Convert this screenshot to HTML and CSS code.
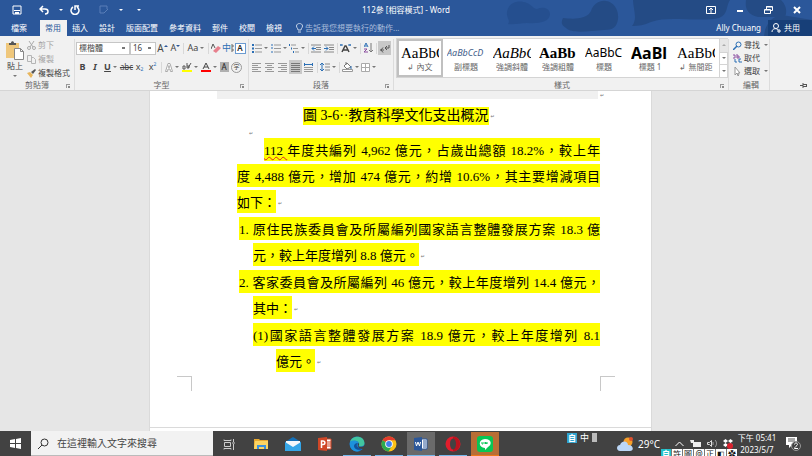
FILE: index.html
```html
<!DOCTYPE html>
<html lang="zh-Hant">
<head>
<meta charset="utf-8">
<title>112參 [相容模式] - Word</title>
<link rel="stylesheet" href="styles.css">
</head>
<body>
<header class="top">
  <svg class="clouds" viewBox="0 0 332 36" preserveAspectRatio="xMaxYMin slice" aria-hidden="true">
    <path fill="#254f8f" d="M27 12C28 3 38-1 47 3c6 3 7 6 10 6 7-3 13 0 13 5 0 8-12 10-23 9-7 0-13 2-19 1 3-3-2-6-1-12z"/>
    <path fill="#244b85" d="M111 11c2-7 9-11 15-10 8 1 13 9 12 18-1 8-5 11-14 11-15 1-32 4-38-2-5-3-5-6-3-10 9 1 24 2 28-7zM153 0h97c-5 8-1 17-16 19-28 2-46-3-63 3-7 3-12 4-19 4 6-7 1-18 1-26zM266 0h35c6 6 6 12 4 17h-27c-12-3-13-10-12-17zM285 30c4-12 13-17 23-14l24 4v16h-48z"/>
  </svg>
  <div class="titlebar">
    <div class="quick">
      <button aria-label="儲存"><svg width="10" height="10" viewBox="0 0 10 10"><path d="M1 1h8v8H1z" fill="none" stroke="#fff"/><path d="M2 5h6v1H2zM3 7h4v2H3z" fill="#fff"/></svg></button>
      <button aria-label="復原"><svg width="10" height="10" viewBox="0 0 10 10"><path d="M1 4h5c4 0 4 5 0 5M4 1L1 4l3 3" fill="none" stroke="#fff" stroke-width="1.5"/></svg></button>
      <i class="caret"></i>
      <button aria-label="重複"><svg width="10" height="10" viewBox="0 0 10 10"><path d="M3 2a4 4 0 1 0 4 0M5 5V1h4" fill="none" stroke="#fff" stroke-width="1.5"/></svg></button>
      <button class="pen" aria-label="觸控筆"><svg width="10" height="10" viewBox="0 0 10 10"><path d="M5 8H1V1h7v3M9 4L5 8" fill="none" stroke="#5a7fb8"/></svg></button>
      <i class="caret"></i>
      <button class="more" aria-label="自訂"><i class="caret"></i></button>
    </div>
    <h1>112參 [相容模式] - Word</h1>
    <div class="window">
      <button aria-label="功能區選項"><svg width="10" height="8" viewBox="0 0 10 8"><path d="M.5.5h9v7h-9zM5 2v5M3 4l2-2 2 2" fill="none" stroke="#fff"/></svg></button>
      <button aria-label="最小化"><svg width="8" height="8" viewBox="0 0 8 8"><path d="M1 4h6v2H1z" fill="#fff"/></svg></button>
      <button aria-label="還原"><svg width="9" height="8" viewBox="0 0 9 8"><path d="M.5 3.500h6v4h-6zM2.500 3V.5h6v4H7M2 1h6M1 4h5" fill="none" stroke="#fff"/></svg></button>
      <button aria-label="關閉"><svg width="8" height="8" viewBox="0 0 8 8"><path d="M1 1l6 6M7 1L1 7" stroke="#fff" stroke-width="2"/></svg></button>
    </div>
  </div>
  <nav class="tabs">
    <button class="file">檔案</button><button class="on">常用</button><button>插入</button><button>設計</button><button>版面配置</button><button>參考資料</button><button>郵件</button><button>校閱</button><button>檢視</button>
    <button class="tell"><svg width="7" height="10" viewBox="0 0 7 10"><path d="M2 7c0-2-1.500-2-1.500-4 0-3.300 6-3.300 6 0C6.500 5 5 5 5 7zM2 9h3" fill="none" stroke="#c5d3e8"/></svg>告訴我您想要執行的動作...</button>
    <span class="user">Ally Chuang</span>
    <button class="share"><svg width="10" height="10" viewBox="0 0 10 10"><circle cx="5" cy="3" r="2.500" fill="none" stroke="#fff"/><path d="M1 9c0-4 5-4 6-2M8 6v4M6 8h4" fill="none" stroke="#fff"/></svg>共用</button>
  </nav>
</header>

<section class="ribbon">
  <div class="group clipboard">
    <div class="cols">
      <button class="paste"><svg width="18" height="19" viewBox="0 0 18 19"><path d="M0 2h13v15H0z" fill="#efc77c"/><path d="M3 4V2h2c0-2.500 3-2.500 3 0h2v2z" fill="#555"/><path d="M8.500 7.500h6l3 3v8h-9z" fill="#fff" stroke="#888"/><path d="M14.500 7.500v3h3" fill="none" stroke="#888"/></svg><span>貼上</span><i class="caret"></i></button>
      <div class="stack">
        <button class="off"><svg width="9" height="9" viewBox="0 0 9 9"><path d="M2 0l4 6M7 0L3 6" stroke="#aaa"/><circle cx="2" cy="7" r="1.500" fill="none" stroke="#aaa"/><circle cx="7" cy="7" r="1.500" fill="none" stroke="#aaa"/></svg>剪下</button>
        <button class="off"><svg width="9" height="9" viewBox="0 0 9 9"><path d="M.5.5h4v6h-4zM4.500 2.500h2l2 2v4h-4z" fill="#f1f1f1" stroke="#b5b5b5"/></svg>複製</button>
        <button><svg width="9" height="9" viewBox="0 0 9 9"><path d="M0 4l3-1 3 3-2 3z" fill="#e8b55b"/><path d="M4 3l4-3 1 1-3 4z" fill="#555"/></svg>複製格式</button>
      </div>
    </div>
    <h2>剪貼簿<i class="launch"></i></h2>
  </div>

  <div class="group font">
    <div class="row f1">
      <select aria-label="字型"><option>標楷體</option></select>
      <select aria-label="字型大小"><option>16</option></select>
      <button aria-label="放大字型"><span class="t10">A</span><svg width="4" height="8" viewBox="0 0 4 8"><path d="M0 3l2-2 2 2z" fill="#2b579a"/></svg></button>
      <button aria-label="縮小字型"><span class="t9">A</span><svg width="4" height="8" viewBox="0 0 4 8"><path d="M0 1h4L2 3z" fill="#2b579a"/></svg></button>
      <i class="sep"></i>
      <button><span class="t9">Aa</span><i class="caret"></i></button>
      <i class="sep"></i>
      <button aria-label="清除格式"><svg width="10" height="10" viewBox="0 0 10 10"><path d="M0 6l2-5 2 4" fill="none" stroke="#555"/><path d="M2 8l5-5 3 2-5 5z" fill="#e7808d"/></svg></button>
      <button class="blue t9" aria-label="注音標示">中<svg width="3" height="9" viewBox="0 0 3 9"><path d="M0 1h2v2H0M0 5h2v2H0" fill="none" stroke="#666"/></svg></button>
      <button class="boxed">A</button>
    </div>
    <div class="row f2">
      <button class="t9"><b>B</b></button>
      <button class="t9"><b class="it">I</b></button>
      <button class="t9"><b class="un">U</b><i class="caret"></i></button>
      <button class="t8"><s>abc</s></button>
      <button class="t9">x<sub>2</sub></button>
      <button class="t9">x<sup>2</sup></button>
      <i class="sep"></i>
      <button aria-label="文字效果"><svg width="8" height="9" viewBox="0 0 8 9"><path d="M.5 8.500L3 .5h2l2.500 8h-2L5 6H3l-.5 2.500zM3.500 4.500h1L4 2.500z" fill="#fff" stroke="#aaa"/></svg><i class="caret"></i></button>
      <button aria-label="醒目提示"><svg width="10" height="11" viewBox="0 0 10 11"><path d="M0 8h10v2H0z" fill="#ff0"/><path d="M1 4h2v3H1zM5 1v5h2V4H5M9 1L6 6" fill="none" stroke="#555"/></svg><i class="caret"></i></button>
      <button aria-label="字型色彩"><svg width="10" height="11" viewBox="0 0 10 11"><path d="M0 8h10v2H0z" fill="red"/><path d="M2 7l3-6 3 6M3 5h4" fill="none" stroke="#444"/></svg><i class="caret"></i></button>
      <button class="shade">A</button>
      <button class="ring">字</button>
    </div>
    <h2>字型<i class="launch"></i></h2>
  </div>

  <div class="group para">
    <div class="row p1">
      <button aria-label="項目符號"><svg width="10" height="9" viewBox="0 0 10 9"><path d="M0 1h2M0 4.500h2M0 8h2" stroke="#2b6fb5" stroke-width="2"/><path d="M3 1h7M3 4.500h7M3 8h7" stroke="#999"/></svg><i class="caret"></i></button>
      <button aria-label="編號"><svg width="10" height="9" viewBox="0 0 10 9"><path d="M1 0v2M1 3v2M1 7v2" stroke="#2b6fb5"/><path d="M3 1h7M3 4.500h7M3 8h7" stroke="#999"/></svg><i class="caret"></i></button>
      <button aria-label="多層次清單"><svg width="10" height="9" viewBox="0 0 10 9"><path d="M0 1h1M2 4.500h1M4 8h1" stroke="#2b6fb5" stroke-width="2"/><path d="M2 1h5M4 4.500h5M6 8h4" stroke="#999"/></svg><i class="caret"></i></button>
      <i class="sep"></i>
      <button aria-label="減少縮排"><svg width="10" height="9" viewBox="0 0 10 9"><path d="M0 1h10M5 3.500h5M5 5.500h5M0 8h10" stroke="#888"/><path d="M5 4.500H1M3 2.500l-2 2 2 2" fill="none" stroke="#2b6fb5"/></svg></button>
      <button aria-label="增加縮排"><svg width="10" height="9" viewBox="0 0 10 9"><path d="M0 1h10M5 3.500h5M5 5.500h5M0 8h10" stroke="#888"/><path d="M0 4.500h4M2 2.500l2 2-2 2" fill="none" stroke="#2b6fb5"/></svg></button>
      <i class="sep"></i>
      <button aria-label="亞洲配置方式"><svg width="11" height="9" viewBox="0 0 11 9"><path d="M2 8l3-6h1l3 6M3 6h5" fill="none" stroke="#444" stroke-width="1.500"/><path d="M0 1h3M8 1h3M1 0v2M10 0v2" fill="none" stroke="#2b6fb5"/></svg><i class="caret"></i></button>
      <i class="sep"></i>
      <button aria-label="排序"><svg width="9" height="10" viewBox="0 0 9 10"><path d="M0 4l2-4 2 4M1 3h2" fill="none" stroke="#2b6fb5"/><path d="M0 6h3L0 9h4" fill="none" stroke="#8b4fa0"/><path d="M7 0v9M5 7l2 2 2-2" fill="none" stroke="#777"/></svg></button>
      <i class="sep"></i>
      <button class="pressed" aria-label="顯示編輯標記"><svg width="10" height="9" viewBox="0 0 10 9"><path d="M0 6h4M3 3.500L1 6l2 2.500M9 1v3H6M7 2L5 4l2 2" fill="none" stroke="#555"/></svg></button>
    </div>
    <div class="row p2">
      <button aria-label="靠左"><svg width="9" height="9" viewBox="0 0 9 9"><path d="M0 .5h9M0 2.500h6M0 4.500h9M0 6.500h6M0 8.500h9" stroke="#999"/></svg></button>
      <button aria-label="置中"><svg width="9" height="9" viewBox="0 0 9 9"><path d="M0 .5h9M2 2.500h5M0 4.500h9M2 6.500h5M0 8.500h9" stroke="#999"/></svg></button>
      <button aria-label="靠右"><svg width="9" height="9" viewBox="0 0 9 9"><path d="M0 .5h9M3 2.500h6M0 4.500h9M3 6.500h6M0 8.500h9" stroke="#999"/></svg></button>
      <button class="pressed" aria-label="左右對齊"><svg width="9" height="9" viewBox="0 0 9 9"><path d="M0 .5h9M0 2.500h9M0 4.500h9M0 6.500h9M0 8.500h9" stroke="#777"/></svg></button>
      <button aria-label="分散對齊"><svg width="9" height="9" viewBox="0 0 9 9"><path d="M.5 0v3M8.500 0v3M1 1.500h7" stroke="#2b6fb5"/><path d="M0 4.500h9M0 6.500h9M0 8.500h9" stroke="#999"/></svg></button>
      <i class="sep"></i>
      <button aria-label="行距"><svg width="10" height="10" viewBox="0 0 10 10"><path d="M2 1v8M0 3l2-2 2 2M0 7l2 2 2-2" fill="none" stroke="#2b6fb5"/><path d="M5 2h5M5 5h5M5 8h5" stroke="#888"/></svg><i class="caret"></i></button>
      <i class="sep"></i>
      <button aria-label="網底"><svg width="11" height="10" viewBox="0 0 11 10"><path d="M2 4l3-3 4 4-4 2zM4 3V0" fill="#fff" stroke="#777"/><path d="M9 4v3" stroke="#2b6fb5"/><path d="M.5 7.500h10v2H.5z" fill="#fff" stroke="#999"/></svg><i class="caret"></i></button>
      <button aria-label="框線"><svg width="9" height="9" viewBox="0 0 9 9"><path d="M.5.5h8v8h-8zM4.500 0v9M0 4.500h9" fill="#fff" stroke="#aaa"/></svg><i class="caret"></i></button>
    </div>
    <h2>段落<i class="launch"></i></h2>
  </div>

  <div class="group styles">
    <div class="gallery">
      <button class="style chosen"><span class="pv serif">AaBbC</span><small>↲ 內文</small></button>
      <button class="style"><span class="pv sub">AaBbCcD</span><small>副標題</small></button>
      <button class="style"><span class="pv serif it">AaBbC</span><small>強調斜體</small></button>
      <button class="style"><span class="pv serif bold">AaBb</span><small>強調粗體</small></button>
      <button class="style"><span class="pv sans">AaBbC</span><small>標題</small></button>
      <button class="style"><span class="pv big">AaBl</span><small>標題 1</small></button>
      <button class="style"><span class="pv serif">AaBbC</span><small>↲ 無間距</small></button>
      <div class="scroll"><button class="dim" aria-label="上"><i class="caret up"></i></button><button aria-label="下"><i class="caret"></i></button><button aria-label="其他"><i class="caret line"></i></button></div>
    </div>
    <h2>樣式<i class="launch"></i></h2>
  </div>

  <div class="group edit">
    <div class="stack">
      <button><svg width="9" height="9" viewBox="0 0 9 9"><circle cx="5.500" cy="3.500" r="2.500" fill="none" stroke="#2b6fb5"/><path d="M4 5L0 9" stroke="#2b6fb5" stroke-width="1.500"/></svg>尋找<i class="caret"></i></button>
      <button><svg width="9" height="9" viewBox="0 0 9 9"><path d="M0 1h2v3H0M4 0v4h2V2H4" fill="none" stroke="#8b4fa0"/><path d="M2 5v3h2M8 5H6v3h3" fill="none" stroke="#2b6fb5"/></svg>取代</button>
      <button><svg width="9" height="9" viewBox="0 0 9 9"><path d="M2 0v8l2-2 1 3 1-1-1-2h2z" fill="#fff" stroke="#999"/></svg>選取<i class="caret"></i></button>
    </div>
    <h2>編輯</h2>
  </div>
  <button class="pin" aria-label="釘選功能區"><svg width="7" height="5" viewBox="0 0 7 5"><path d="M0 2.500h3M3 0v5M3 1.500h4M3 3.500h4M6.500 1v3" fill="none" stroke="#555"/></svg></button>
</section>

<main class="desk">
  <article class="page">
    <div class="cell"><span></span><i class="ret">↵</i></div>
    <p class="caption"><mark>圖 3-6··教育科學文化支出概況</mark><i class="ret">↵</i></p>
    <p class="blank"><i class="ret">↵</i></p>
    <p class="body">
      <mark class="full first"><span class="wavy">112&nbsp;</span>年度共編列 4,962 億元，占歲出總額 18.2%，較上年</mark>
      <mark class="full">度 4,488 億元，增加 474 億元，約增 10.6%，其主要增減項目</mark>
      <mark>如下：</mark><i class="ret">↵</i>
    </p>
    <p class="body">
      <mark class="full num">1. 原住民族委員會及所屬編列國家語言整體發展方案 18.3 億</mark>
      <mark class="in">元，較上年度增列 8.8 億元。</mark><i class="ret">↵</i>
    </p>
    <p class="body">
      <mark class="full num">2. 客家委員會及所屬編列 46 億元，較上年度增列 14.4 億元，</mark>
      <mark class="in">其中：</mark><i class="ret">↵</i>
    </p>
    <p class="body">
      <mark class="full in">(1)國家語言整體發展方案 18.9 億元，較上年度增列 8.1</mark>
      <mark class="in2">億元。</mark><i class="ret">↵</i>
    </p>
    <div class="corners"><i class="l"></i><i class="r"></i></div>
  </article>
  <div class="page next"></div>
</main>

<footer class="taskbar">
  <button class="start" aria-label="開始"><svg width="11" height="11" viewBox="0 0 11 11"><path d="M0 2l5-1v4H0zM6 1l5-1v5H6zM0 6h5v4L0 9zM6 6h5v5l-5-1z" fill="#fff"/></svg></button>
  <label class="search"><svg width="11" height="11" viewBox="0 0 11 11"><circle cx="6.500" cy="4.500" r="3.500" fill="none" stroke="#333"/><path d="M4 7l-4 4" stroke="#333"/></svg><input type="text" placeholder="在這裡輸入文字來搜尋" aria-label="搜尋"></label>
  <div class="apps">
    <button aria-label="工作檢視"><svg width="12" height="11" viewBox="0 0 12 11"><path d="M1.500 3.500h6v4h-6zM1 .5v1h7v-1M1 10.500v-1h7v1M10.500 0v3M10.500 5v6M9 4h3" fill="none" stroke="#ccc"/></svg></button>
    <button aria-label="檔案總管"><svg width="14" height="12" viewBox="0 0 14 12"><path d="M0 1h5l1 1h8v9H0z" fill="#e8a92f"/><path d="M1 3h13v8H0z" fill="#fcd462"/><path d="M3 11V7h9v4h-2V9H5v2z" fill="#3c91dc"/></svg></button>
    <button aria-label="郵件"><svg width="16" height="14" viewBox="0 0 16 14"><path d="M0 5l8-5 8 5v9H0z" fill="#1470b8"/><path d="M1 4h14v4l-7 4-7-4z" fill="#f4f7fa"/><path d="M0 5l8 5 8-5v9H0z" fill="#35a6e8"/></svg></button>
    <button aria-label="PowerPoint"><svg width="14" height="14" viewBox="0 0 14 14"><path d="M7 2h6v10H7z" fill="#fff" stroke="#d04727"/><path d="M9 5h4M9 7h4M9 9h4" stroke="#d04727"/><path d="M0 1l9-1v14l-9-1z" fill="#d04727"/><path d="M3.500 11V4H5c2.500 0 2.500 3.500 0 3.500H3.500" fill="none" stroke="#fff" stroke-width="1.500"/></svg></button>
    <button class="run" aria-label="Edge"><svg width="16" height="16" viewBox="0 0 16 16"><circle cx="8" cy="8" r="7.500" fill="#1b78c8"/><path d="M1 6C3-1 15-1 15.500 7c0 4-5 4-6 3 2-3-1-6-5-5-2 0-3 1-3.500 1z" fill="#42c6a0"/><path d="M1 6c3-3 8-1 8 1-3 0-4 5 0 7l2 1C4 17 0 12 1 6z" fill="#1d92dc"/><path d="M9 7c-3 2-1 6 5 5-2 3-9 2-9-2 0-2 2-3 4-3z" fill="#12519a"/><path d="M9.500 7c1 1 .5 2 0 3 2 2 6 0 6.500-1v4h-2c-5 0-6-4-4.500-6z" fill="#424242"/></svg></button>
    <button class="run" aria-label="Chrome"><svg width="16" height="16" viewBox="0 0 16 16"><circle cx="8" cy="8" r="7.500" fill="#fbc116"/><path d="M8 8L1.500 4.200A7.500 7.500 0 0 1 14.500 4.200H8z" fill="#e33b2e"/><path d="M1.500 4.200A7.500 7.500 0 0 0 7.500 15.500L11 10 8 8z" fill="#2da94f"/><circle cx="8" cy="8" r="3.800" fill="#fff"/><circle cx="8" cy="8" r="2.900" fill="#4081ec"/></svg></button>
    <button class="run tile" aria-label="Word"><svg width="14" height="14" viewBox="0 0 14 14"><path d="M7 2h6v10H7z" fill="#fff" stroke="#2b579a"/><path d="M9 4h3M9 6h3M9 8h3M9 10h3" stroke="#2b579a"/><path d="M0 1l8-1v14l-8-1z" fill="#2b579a"/><path d="M1.500 5l1 4L4 5l1.500 4 1-4" fill="none" stroke="#fff"/></svg></button>
    <button class="run" aria-label="Opera"><svg width="16" height="16" viewBox="0 0 16 16"><circle cx="8" cy="8" r="7.500" fill="#e21d2c"/><path d="M8 1c4-1 7 3 7 7s-3 8-7 7z" fill="#b9131e"/><ellipse cx="8" cy="8" rx="3" ry="5.500" fill="#424242"/></svg></button>
    <button class="line-app" aria-label="LINE"><svg width="16" height="16" viewBox="0 0 16 16"><rect width="16" height="16" rx="3" fill="#07c755"/><path d="M8 3c7 0 7 6 3 8l-3 3v-2C1 12 1 3 8 3z" fill="#fff"/><path d="M5 6v2h1M7 6v2M8.500 8V6l1.500 2V6" fill="none" stroke="#07c755"/></svg></button>
  </div>
  <div class="ime"><b>自</b><span>中</span><i></i></div>
  <div class="weather"><svg width="17" height="14" viewBox="0 0 17 14"><circle cx="11" cy="5" r="4.500" fill="#f5a02a"/><circle cx="14" cy="2" r="2" fill="#e0502d"/><path d="M3 14c-4 0-4-6 0-6 2-5 8-4 8 0 6 0 6 6 2 6z" fill="#bcd7f7"/></svg>29°C</div>
  <div class="tray">
    <svg width="9" height="6" viewBox="0 0 9 6"><path d="M.5 5l4-4 4 4" fill="none" stroke="#fff"/></svg>
    <svg width="11" height="9" viewBox="0 0 11 9"><path d="M3 3h8v5H3zM0 1h4v3H1z" fill="#eee"/></svg>
    <svg width="10" height="9" viewBox="0 0 10 9"><path d="M.5 3.500h2l2-2v6l-2-2h-2z" fill="none" stroke="#ddd"/><path d="M6 3v3M8 1c2 2 2 5 0 7" fill="none" stroke="#aaa"/></svg>
    <svg width="10" height="10" viewBox="0 0 10 10"><path d="M0 2l2.500-2L5 2l2.500-2L10 2 7.500 4 10 6 7.500 8 5 6 2.500 8 0 6l2.500-2zM5 2L2.500 4 5 6l2.500-2z" fill="#fff" fill-rule="evenodd"/><circle cx="7" cy="7" r="3" fill="#d8212d"/></svg>
  </div>
  <div class="clock"><span>下午 05:41</span><span>2023/5/7</span></div>
  <button class="notice" aria-label="通知"><svg width="15" height="16" viewBox="0 0 15 16"><path d="M0 1h11v8H6l-3 3V9H0z" fill="#fff"/><path d="M2 3h7M2 5h7" stroke="#555"/><circle cx="10" cy="10" r="4.500" fill="#424242" stroke="#999"/><path d="M8.500 8.500c0-2 3-2 3 0 0 1-3 2.500-3 4h3.500" fill="none" stroke="#fff"/></svg></button>
  <div class="imebar"><b>自</b><span>許</span><span>圖</span><span>@</span><span>正</span><span>◧</span><span>✿</span></div>
</footer>
</body>
</html>
```
FILE: styles.css
```css
* { box-sizing: border-box; margin: 0; padding: 0; }
html, body { height: 100%; }
body {
  display: flex; flex-direction: column; overflow: hidden;
  font: 8px/10px "Noto Sans", "Noto Sans CJK TC", sans-serif;
  color: #444; background: #e6e6e6;
}
button, select, input { font: inherit; color: inherit; background: none; border: 0; border-radius: 0; }
button { display: flex; align-items: center; justify-content: center; white-space: nowrap; }
svg { display: block; flex: none; }
i { font-style: normal; }
.caret { flex: none; width: 0; height: 0; border: 2px solid transparent; border-top-color: currentColor; border-bottom: 0; margin-left: 2px; }
.ribbon .caret { border-top-color: #777; }
.ribbon .caret.up { border-top: 0; border-bottom: 2px solid #aaa; }
.sep { width: 1px; height: 11px; background: #d8d8d8; justify-self: center; }

/* title bar and tabs */
.top { position: relative; flex: none; background: #2b579a; color: #fff; }
.clouds { position: absolute; top: 0; right: 0; height: 36px; width: 332px; }
.titlebar, .tabs { position: relative; }
.titlebar { display: grid; grid-template-columns: 1fr auto 1fr; align-items: center; height: 20px; }
.titlebar h1 { font-size: 8px; font-weight: 400; }
.quick { display: flex; align-items: center; padding-left: 12px; }
.quick button { margin-right: 17px; }
.quick .pen { margin-left: 2px; }
.quick .caret { margin: 0 7px 0 -7px; }
.quick .pen + .caret { margin-right: 11px; }
.quick .more .caret { margin: 0 0 0 3px; }
.window { display: flex; justify-content: flex-end; gap: 20px; padding-right: 11px; }
.tabs { display: flex; height: 16px; padding-left: 6px; }
.tabs button { padding: 0 6px 0 5px; }
.tabs .file { margin-right: 7px; }
.tabs .on { background: #f1f1f1; color: #2b579a; }
.tabs .tell { color: #a9bddb; gap: 2px; margin-left: 3px; }
.user { margin-left: auto; padding: 3px 7px 0 0; }
.tabs .share { background: #173f78; gap: 3px; padding: 0 12px 0 3px; }

/* ribbon */
.ribbon { flex: none; display: flex; height: 55px; padding-top: 3px; background: #f1f1f1; border-bottom: 1px solid #d5d5d5; }
.group { display: flex; flex-direction: column; border-right: 1px solid #dcdcdc; }
.group h2 { position: relative; margin-top: auto; font-size: 8px; font-weight: 400; text-align: center; color: #666; }
.launch { position: absolute; right: 4px; bottom: 2px; width: 4px; height: 4px; border: solid #999; border-width: 1px 0 0 1px; }
.launch::after { content: ""; position: absolute; right: 0; bottom: 0; width: 2px; height: 2px; background: #888; }
.clipboard { width: 75px; }
.cols { display: flex; gap: 2px; padding-left: 6px; }
.paste { flex-direction: column; width: 18px; gap: 1px; }
.paste .caret { margin: 3px 0 0; }
.stack { display: flex; flex-direction: column; align-items: flex-start; gap: 2px; }
.stack button { height: 12px; gap: 2px; }
.clipboard .stack { padding-left: 1px; }
.off { color: #a6a6a6; }
.font { width: 174px; }
.para { width: 145px; }
.row { display: grid; align-items: center; justify-items: center; height: 18px; padding-left: 1px; }
.f1 { grid-template-columns: 54px 26px 13px 13px 3px 22px 3px 12px 12px 12px; }
.f2, .p2 { margin-top: 1px; }
.f2 { grid-template-columns: 13px 12px 19px 13px 13px 13px 4px 17px 19px 19px 12px 13px; }
.p1 { grid-template-columns: 19px 19px 18px 4px 12px 13px 4px 19px 4px 12px 4px 13px; }
.p2 { grid-template-columns: 13px 13px 13px 13px 13px 4px 18px 4px 18px 19px; }
select {
  appearance: none; width: 100%; height: 13px; padding-left: 2px; border: 1px solid #c6c6c6;
  background: linear-gradient(#777, #777) right 4px center / 3px 2px no-repeat #fff;
}
.t8 { font-size: 8px; }
.t9 { font-size: 9px; }
.t10 { font-size: 10px; }
.blue { color: #2b6fb5; }
.boxed { width: 11px; height: 11px; border: 1px solid #6b9bd1; background: #fff; font-weight: 600; color: #222; }
.shade { width: 9px; height: 10px; background: #b0b0b0; color: #222; }
.ring { width: 11px; height: 11px; border: 1px solid #999; border-radius: 50%; font-size: 6px; }
.it { font-style: italic; }
.un { text-decoration: underline; }
sub, sup { font-size: 5px; line-height: 5px; color: #2b6fb5; }
sub { align-self: flex-end; }
sup { align-self: flex-start; }
.pressed { width: 13px; height: 14px; background: #c8c8c8; }
.styles { flex: none; width: 335px; padding-left: 2px; }
.gallery { display: grid; grid-template-columns: repeat(7, 46px) 9px; height: 40px; margin-top: -1px; width: 332px; border: 1px solid #d4d4d4; background: #fff; }
.style { flex-direction: column; justify-content: flex-end; padding: 0 4px 5px; overflow: hidden; }
.chosen { border: 2px solid #c0c0c0; padding: 0 2px 3px; }
.style small { font-size: 8px; line-height: 10px; color: #666; }
.pv { align-self: stretch; overflow: hidden; line-height: 18px; text-align: left; color: #000; }
.serif { font-family: "Liberation Serif", serif; font-size: 15px; }
.sub { font-size: 9px; font-style: italic; color: #44608a; }
.bold { font-weight: 700; }
.sans { font-size: 12px; }
.big { font-size: 16px; font-weight: 700; }
.scroll { display: grid; grid-template-rows: 1fr 1fr 1fr; border-left: 1px solid #d4d4d4; }
.scroll button + button { border-top: 1px solid #d4d4d4; }
.scroll .caret { margin: 0; }
.dim { background: #e6e6e6; }
.line { box-shadow: 0 -2px 0 -1px #555; }
.edit { width: 41px; padding-left: 4px; }
.edit .stack { gap: 1px; }
.pin { margin: auto 5px 2px auto; }

/* document */
.desk { flex: 1; min-height: 0; overflow: hidden; display: grid; grid-template-columns: 150fr 501fr 161fr; grid-template-rows: 336px 1fr; row-gap: 1px; }
.page { grid-column: 2; background: #fff; padding: 0 51px 0 87px; box-shadow: 0 0 0 1px #dadada; }
.next { padding: 0; }
.cell { display: flex; height: 16px; margin-left: -20px; }
.cell span { flex: 1; height: 8px; background: #f0f0f0; }
.cell .ret { width: 0; }
.ret { font: 5px/8px "DejaVu Sans", sans-serif; color: #777; padding-left: 2px; }
mark { background: #ff0; color: #000; font: 13px/20px "Liberation Serif", "Noto Sans CJK TC", serif; }
.caption { padding-left: 66px; height: 18px; display: flex; align-items: center; }
.caption mark { line-height: 18px; height: 18px; font-size: 14px; white-space: nowrap; }
.blank { height: 13px; padding: 3px 0 0 10px; line-height: 8px; }
.body { display: flex; flex-wrap: wrap; align-items: center; margin-bottom: 1px; }
.body mark { height: 23px; padding-top: 3px; margin-bottom: 3px; white-space: nowrap; }
.body .full { flex: 1 0 100%; text-align: justify; text-align-last: justify; }
.body .first { flex-basis: 80%; margin-left: 27px; }
.body .num { flex-basis: 90%; margin-left: 2px; }
.body .in { margin-left: 16px; }
.body .full.in { flex-basis: 90%; }
.body .in2 { margin-left: 39px; }
.wavy { text-decoration: underline wavy #e02020 1px; }
.corners { display: flex; justify-content: space-between; margin: 1px -15px 0 -60px; }
.corners i { width: 15px; height: 15px; border: solid #c8c8c8; border-width: 1px 0 0 1px; }
.corners .l { border-width: 1px 1px 0 0; }

/* taskbar */
.taskbar { position: relative; flex: none; display: flex; align-items: stretch; height: 25px; background: #424242; color: #fff; }
.start { width: 31px; }
.search { display: flex; align-items: center; gap: 8px; width: 182px; padding-left: 7px; background: #f2f2f2; border-bottom: 1px solid #bbb; }
.search input { flex: 1; min-width: 0; font-size: 10px; line-height: 14px; outline: 0; }
.search input::placeholder { color: #444; opacity: 1; }
.apps { display: flex; }
.apps button { width: 32px; border: solid transparent; border-width: 1px 2px 0; background-clip: padding-box; }
.apps .run { box-shadow: inset 0 -1px #76b9ed; }
.apps .tile { background-color: #6a6a6a; }
.apps .line-app { background-color: #b86e35; box-shadow: inset 0 -1px #f07818; }
.ime { display: flex; align-items: flex-start; gap: 3px; margin-left: auto; padding-top: 2px; font-size: 9px; }
.ime b { width: 10px; height: 10px; background: #2fa4cf; font-size: 8px; text-align: center; }
.ime i { width: 5px; height: 9px; background: #bbb; }
.weather { display: flex; align-items: center; gap: 4px; margin-left: 20px; font-size: 10px; }
.tray { display: flex; align-items: center; gap: 6px; margin-left: 15px; }
.clock { display: flex; flex-direction: column; justify-content: center; gap: 2px; width: 40px; margin-left: 4px; text-align: center; white-space: nowrap; }
.notice { margin: 0 11px 0 9px; }
.imebar { position: absolute; right: 75px; bottom: 0; display: flex; gap: 1px; height: 7px; overflow: hidden; background: #777; color: #111; }
.imebar > * { width: 10px; background: #fff; font-size: 8px; line-height: 9px; text-align: center; }
.imebar b { background: #22bfc8; color: #fff; }
```
